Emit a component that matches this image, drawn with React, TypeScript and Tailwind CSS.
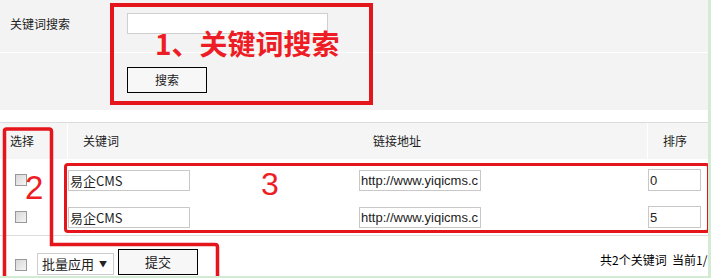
const CJK = "font-['SimSun','Noto_Sans_CJK_SC',sans-serif]"

function Check() {
  return <span className="inline-block h-[12px] w-[12px] border border-[#999] bg-gradient-to-br from-[#d8d8d8] to-[#f4f4f4]" />
}

const ROWS = [
  { name: '易企CMS', url: 'http://www.yiqicms.c', order: '0' },
  { name: '易企CMS', url: 'http://www.yiqicms.c', order: '5' },
]

export default function App() {
  return (
    <div className="relative h-[278px] w-[711px] overflow-hidden border-b-[2px] border-r-[3px] border-[#d3ead3] bg-white text-[12px] text-[#222] font-['Noto_Sans_CJK_SC',sans-serif]">
      {/* search */}
      <div className="bg-[#f3f3f3]">
        <div className="flex h-[53px] border-b border-white">
          <div className="w-[127px] pl-[10px] pt-[15px]">关键词搜索</div>
          <div className="pt-[13px]">
            <input type="text" className="h-[21px] w-[201px] border border-[#cfcfcf] bg-white outline-none" />
          </div>
        </div>
        <div className="flex h-[57px]">
          <div className="w-[127px]" />
          <div className="pt-[14px]">
            <button className="h-[26px] w-[80px] border border-black bg-[#f7f7f7] text-[12px]">搜索</button>
          </div>
        </div>
      </div>

      <div className="h-[13px] border-b border-[#dcdcdc]" />

      {/* table */}
      <div className="flex h-[37px] items-center bg-[#f5f5f5] border-b border-white">
        <div className="flex h-full w-[68px] items-center border-r border-white pl-[10px]">选择</div>
        <div className="flex h-full w-[282px] items-center pl-[15px]">关键词</div>
        <div className="flex h-full w-[298px] items-center border-r border-white pl-[23px]">链接地址</div>
        <div className="flex h-full flex-1 items-center pl-[15px]">排序</div>
      </div>

      <div className="border-b border-[#dcdcdc] pb-[7px] pt-[9px]">
        {ROWS.map((r, i) => (
          <div key={i} className={`flex items-center ${i ? 'mt-[15px]' : ''}`}>
            <div className="flex w-[68px] pl-[15px]"><Check /></div>
            <div className="w-[291px]">
              <input readOnly value={r.name} className="h-[21px] w-[122px] border border-[#c8c8c8] bg-white px-[1px] text-[13px] outline-none font-['Noto_Sans_CJK_SC',sans-serif]" />
            </div>
            <div className="w-[289px]">
              <input readOnly value={r.url} className="h-[21px] w-[122px] border border-[#c8c8c8] bg-white px-[1px] text-[13px] outline-none font-['Liberation_Sans',Arial,sans-serif]" />
            </div>
            <div>
              <input readOnly value={r.order} className="h-[22px] w-[53px] border border-[#c8c8c8] bg-white px-[1px] text-[13px] outline-none font-['Liberation_Sans',Arial,sans-serif]" />
            </div>
          </div>
        ))}
      </div>

      <div className="flex h-[41px] items-end pb-[2px]">
        <div className="flex w-[37px] shrink-0 pb-[4px] pl-[15px]"><Check /></div>
        <div className="flex h-[22px] w-[77px] shrink-0 items-center justify-between border border-[#ccc] bg-white pl-[4px] pr-[6px] text-[13px]">
          <span>批量应用</span>
          <span className="text-[8px]">▼</span>
        </div>
        <button className="ml-[4px] h-[26px] w-[80px] shrink-0 border border-black bg-[#f7f7f7] text-[13px]">提交</button>
        <div className={`ml-[402px] shrink-0 whitespace-nowrap pb-[6px] text-[12px] text-black ${CJK}`}>
          共2个关键词&nbsp;&nbsp;当前1/1
        </div>
      </div>

      {/* annotations */}
      <div className="pointer-events-none absolute left-[110px] top-[3px] h-[102px] w-[263px] border-[4px] border-[#e4151b]" />
      <div className="pointer-events-none absolute left-[155px] top-[29px] text-[28px] font-bold leading-none text-[#ee1c24]">1、关键词搜索</div>
      <div className="pointer-events-none absolute left-[64px] top-[163px] h-[70px] w-[646px] rounded-[4px] border-[3px] border-[#e4151b]" />
      <div className="pointer-events-none absolute left-[261px] top-[168px] text-[32px] font-medium leading-none text-[#ee1c24] font-['Liberation_Sans',sans-serif]">3</div>
      <div className="pointer-events-none absolute left-[25px] top-[171px] text-[33px] font-medium leading-none text-[#ee1c24] font-['Liberation_Sans',sans-serif]">2</div>
      <svg className="pointer-events-none absolute left-0 top-0" width="711" height="278">
        <path d="M4.5 280 V131 Q4.5 129 6.5 129 H49 Q51.5 129 51.5 131.5 V244.5 H215 Q217.5 244.5 217.5 247 V280" fill="none" stroke="#e4151b" strokeWidth="3.5" />
      </svg>
    </div>
  )
}
